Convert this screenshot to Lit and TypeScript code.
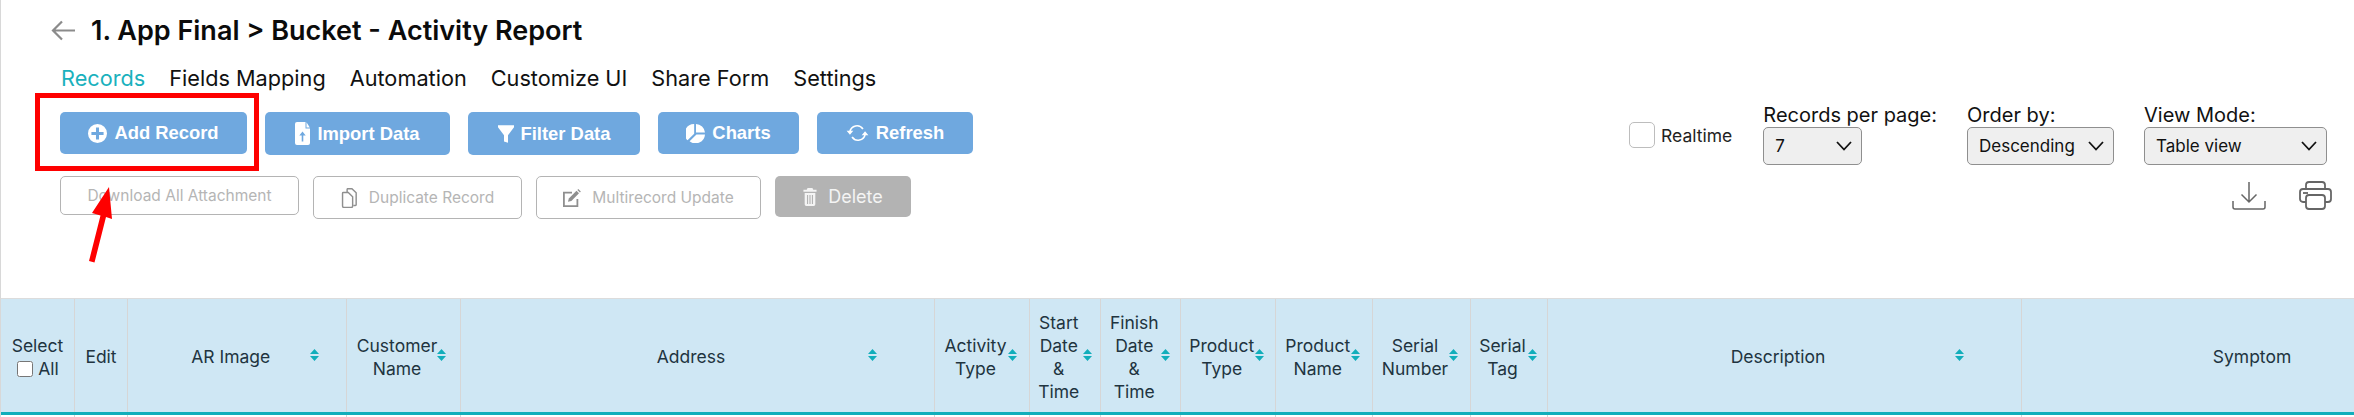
import { LitElement, css, html, svg } from 'lit'
import { customElement } from 'lit/decorators.js'

const icons = {
  plus: svg`<path fill-rule="evenodd" d="M10 0a10 10 0 1 0 0 20a10 10 0 0 0 0-20zM8.400 3.600h3.200v4.800h4.800v3.200h-4.800v4.800H8.400v-4.800H3.600V8.400h4.800z"/>`,
  file: svg`<path fill-rule="evenodd" d="M2 0h8.500v6.500H15V21a2 2 0 0 1-2 2H2a2 2 0 0 1-2-2V2a2 2 0 0 1 2-2zM11.500.3L14.800 5.500h-3.300zM7.500 9.500L4.300 13.500h2.400v6h1.600v-6h2.400z"/>`,
  filter: svg`<path d="M0 0h20v2.500L12.500 12.500V22l-5-1.500v-8L0 2.500z"/>`,
  pie: svg`<path d="M8.600 0v10.200l-7 7A10 10 0 0 1 8.600 0zM10.500 0A10 10 0 0 1 20 9h-9.500zM11 11h9a10 10 0 0 1-16.200 7.200z"/>`,
  refresh: svg`<path fill="none" stroke="currentColor" stroke-width="1.800" d="M3.600 9.500A8 8 0 0 1 18 6.500M20.400 12.500A8 8 0 0 1 6 15.500"/><path d="M0 8.500h7.400L3.700 13zM24 13.500h-7.400L20.300 9z"/>`,
  copy: svg`<g fill="none" stroke="currentColor" stroke-width="1.500"><path d="M5.500 4.500V1.500A.8.8 0 0 1 6.300.7h4.200L15 5v12.500a.8.8 0 0 1-.8.8H12"/><path d="M1.500 4.700h5.200l4.600 4.500v9.800a1.500 1.500 0 0 1-1.500 1.500H2a1.500 1.500 0 0 1-1.300-1.500V5.500a.8.8 0 0 1 .8-.8z"/></g>`,
  edit: svg`<path fill="none" stroke="currentColor" stroke-width="2" d="M10 4H1v15h15v-8"/><path d="M6.500 10.500L15 2l2.800 2.800-8.500 8.500-3.800 1z"/><path d="M16 1l1-1 2.800 2.800-1 1z"/>`,
  trash: svg`<path fill-rule="evenodd" d="M5 0h6l1 2h4v2.500H0V2h4zM1.500 6h13v14a2 2 0 0 1-2 2h-9a2 2 0 0 1-2-2zM4.300 8.500v11h1.400v-11zM7.300 8.500v11h1.400v-11zM10.300 8.500v11h1.400v-11z"/>`,
}

const mainButtons = [
  { label: 'Add Record', icon: icons.plus, box: '0 0 20 20', cls: 'add', iw: 19, ih: 19 },
  { label: 'Import Data', icon: icons.file, box: '0 0 15 23', cls: 'imp', iw: 15, ih: 23 },
  { label: 'Filter Data', icon: icons.filter, box: '0 0 20 22', cls: 'fil', iw: 16, ih: 20 },
  { label: 'Charts', icon: icons.pie, box: '0 0 20 20', cls: 'cha', iw: 19, ih: 19 },
  { label: 'Refresh', icon: icons.refresh, box: '0 0 24 22', cls: 'ref', iw: 23, ih: 20 },
]

const columns = [
  { w: 73.5, lines: ['Select'], select: true },
  { w: 53, lines: ['Edit'], plain: true },
  { w: 218.5, lines: ['AR Image'] },
  { w: 114, lines: ['Customer', 'Name'] },
  { w: 474, lines: ['Address'] },
  { w: 95, lines: ['Activity', 'Type'] },
  { w: 71.5, lines: ['Start', 'Date', '&', 'Time'] },
  { w: 79.5, lines: ['Finish', 'Date', '&', 'Time'] },
  { w: 95.5, lines: ['Product', 'Type'] },
  { w: 96.5, lines: ['Product', 'Name'] },
  { w: 98, lines: ['Serial', 'Number'] },
  { w: 77, lines: ['Serial', 'Tag'] },
  { w: 474, lines: ['Description'] },
  { w: 474, lines: ['Symptom'] },
]

@customElement('app-root')
export class AppRoot extends LitElement {
  static styles = css`
    :host {
      display: block;
      width: 2354px;
      height: 417px;
      overflow: hidden;
      position: relative;
      background: #fff;
      font-family: Inter, 'Liberation Sans', sans-serif;
      color: #111;
    }
    .page {
      border-left: 1px solid #d8d8d8;
      height: 417px;
      box-sizing: border-box;
    }
    .title-row {
      display: flex;
      align-items: center;
      height: 40px;
      padding: 10px 0 0 50px;
      gap: 16px;
    }
    .title-row svg { width: 24px; height: 21px; color: #8b8b8b; }
    h1 {
      margin: 0;
      font-size: 27px;
      font-weight: 600;
      color: #0b0b0b;
      white-space: nowrap;
    }
    nav {
      display: flex;
      gap: 24px;
      height: 28px;
      align-items: center;
      padding: 14px 0 0 60px;
      font-size: 21.7px;
    }
    nav .on { color: #1ab1bd; }
    .tools {
      display: flex;
      justify-content: space-between;
      height: 206px;
      padding: 20px 27px 0 59px;
      box-sizing: border-box;
    }
    .row { display: flex; align-items: flex-start; gap: 18px; }
    .row + .row { margin-top: 21px; gap: 14px; }
    .btn {
      display: inline-flex;
      align-items: center;
      justify-content: center;
      box-sizing: border-box;
      border-radius: 5px;
      white-space: nowrap;
    }
    .main {
      height: 42px;
      background: #6fa8df;
      color: #fff;
      font: bold 18.400px 'Liberation Sans', sans-serif;
      gap: 7px;
    }
    .main svg { fill: currentColor; }
    .add { width: 187px; }
    .imp { width: 185px; height: 43px; }
    .fil { width: 172px; height: 43px; }
    .cha { width: 141px; }
    .ref { width: 156px; }
    .ghost {
      border: 1px solid #b4b4b4;
      color: #b5b5b5;
      font-size: 15.500px;
      height: 43px;
      gap: 11px;
    }
    .ghost svg { fill: #8f8f8f; color: #8f8f8f; }
    .dl { width: 239px; height: 39px; }
    .dup { width: 209px; }
    .multi { width: 225px; }
    .del {
      width: 136px;
      height: 41px;
      background: #b3b3b3;
      color: #f4f4f4;
      font-size: 18px;
      gap: 11px;
    }
    .del svg { fill: #f4f4f4; }
    .side { display: flex; flex-direction: column; align-items: flex-end; }
    .controls { display: flex; align-items: flex-start; gap: 30px; margin-top: -8px; }
    .realtime {
      display: flex;
      align-items: center;
      gap: 6px;
      font-size: 17.500px;
      margin: 18px 1px 0 0;
      color: #222;
    }
    .realtime i {
      display: block;
      width: 26px;
      height: 26px;
      box-sizing: border-box;
      border: 1px solid #bdbdbd;
      border-radius: 5px;
    }
    .field { display: flex; flex-direction: column; font-size: 20px; line-height: 23px; }
    .sel {
      display: flex;
      align-items: center;
      justify-content: space-between;
      height: 38px;
      box-sizing: border-box;
      border: 1px solid #8f8f8f;
      border-radius: 5px;
      background: #efefef;
      font-size: 17px;
      padding: 0 9px 0 11px;
    }
    .sel svg { width: 16px; height: 10px; }
    .s-pages { width: 99px; }
    .s-order { width: 147px; }
    .s-view { width: 183px; }
    .actions { display: flex; gap: 33px; margin: 16px -5px 0 0; color: #666; }
    .wrap { overflow: hidden; width: 2353px; border-top: 1px solid #dcdcdc; }
    table { border-collapse: collapse; table-layout: fixed; width: 2494px; }
    th {
      position: relative;
      height: 114px;
      padding: 3px 16px 0 4px;
      background: #cfe7f4;
      border-right: 1px solid #d6d6d6;
      border-bottom: 3px solid #12aebb;
      font-size: 17.500px;
      font-weight: 400;
      line-height: 23px;
      color: #21343f;
      text-align: center;
      box-sizing: border-box;
    }
    th.plain, th.sel-all { padding: 3px 0 0; }
    th input { width: 16px; height: 16px; margin: 0 5px 0 1px; vertical-align: -2px; }
    th div { white-space: nowrap; }
    .sort {
      position: absolute;
      top: 50%;
      right: 12%;
      width: 9px;
      height: 12px;
      margin-top: -6px;
    }
    td { height: 10px; border-right: 1px solid #d6d6d6; padding: 0; }
    .callout {
      position: absolute;
      left: 35px;
      top: 93px;
      width: 224px;
      height: 78px;
      box-sizing: border-box;
      border: 5px solid #fe0000;
      pointer-events: none;
    }
    .arrow { position: absolute; left: 80px; top: 180px; width: 40px; height: 90px; }
  `

  private header(c: (typeof columns)[number]) {
    if (c.select) {
      return html`<th class="sel-all">
        <div>Select</div>
        <div><input type="checkbox" />All</div>
      </th>`
    }
    return html`<th class=${c.plain ? 'plain' : ''}>
      ${c.lines.map((l) => html`<div>${l}</div>`)}
      ${c.plain
        ? ''
        : html`<svg class="sort" viewBox="0 0 9 12" fill="#12aebb"><path d="M4.500 0L9 5H0zM0 7h9L4.500 12z" /></svg>`}
    </th>`
  }

  render() {
    const chevron = html`<svg viewBox="0 0 16 10" fill="none" stroke="#111" stroke-width="1.800"><path d="M1 1l7 7.500L15 1" /></svg>`
    return html`
      <div class="page">
        <div class="title-row">
          <svg viewBox="0 0 24 21" fill="none" stroke="currentColor" stroke-width="2.200"><path d="M24 10.500H2M11 1.500l-9 9 9 9" /></svg>
          <h1>1. App Final &gt; Bucket - Activity Report</h1>
        </div>
        <nav>
          <span class="on">Records</span>
          <span>Fields Mapping</span>
          <span>Automation</span>
          <span>Customize UI</span>
          <span>Share Form</span>
          <span>Settings</span>
        </nav>
        <div class="tools">
          <div>
            <div class="row">
              ${mainButtons.map(
                (b) => html`<span class="btn main ${b.cls}">
                  <svg viewBox=${b.box} width=${b.iw} height=${b.ih}>${b.icon}</svg>${b.label}
                </span>`,
              )}
            </div>
            <div class="row">
              <span class="btn ghost dl">Download All Attachment</span>
              <span class="btn ghost dup"><svg viewBox="0 0 16 21" width="17" height="20">${icons.copy}</svg>Duplicate Record</span>
              <span class="btn ghost multi"><svg viewBox="0 0 20 20" width="18" height="18">${icons.edit}</svg>Multirecord Update</span>
              <span class="btn del"><svg viewBox="0 0 16 22" width="14" height="18">${icons.trash}</svg>Delete</span>
            </div>
          </div>
          <div class="side">
            <div class="controls">
              <label class="realtime"><i></i>Realtime</label>
              <div class="field">Records per page:<div class="sel s-pages">7 ${chevron}</div></div>
              <div class="field">Order by:<div class="sel s-order">Descending ${chevron}</div></div>
              <div class="field">View Mode:<div class="sel s-view">Table view ${chevron}</div></div>
            </div>
            <div class="actions">
              <svg width="34" height="29" viewBox="0 0 34 29" fill="none" stroke="currentColor" stroke-width="1.500"><path d="M17 1v20M9.500 13.500L17 21l7.500-7.500M1 20v6a2 2 0 0 0 2 2h28a2 2 0 0 0 2-2v-6" /></svg>
              <svg width="33" height="29" viewBox="0 0 33 29" fill="none" stroke="currentColor" stroke-width="1.800"><path d="M7 8V4a3 3 0 0 1 3-3h13a3 3 0 0 1 3 3v4M7 21H4a3 3 0 0 1-3-3v-7a3 3 0 0 1 3-3h25a3 3 0 0 1 3 3v7a3 3 0 0 1-3 3h-3" /><rect x="7" y="14" width="19" height="14" rx="3" /><path d="M4 12h5" /></svg>
            </div>
          </div>
        </div>
        <div class="wrap">
          <table>
            <colgroup>${columns.map((c) => html`<col style="width:${c.w}px" />`)}</colgroup>
            <thead><tr>${columns.map((c) => this.header(c))}</tr></thead>
            <tbody><tr>${columns.map(() => html`<td></td>`)}</tr></tbody>
          </table>
        </div>
      </div>
      <div class="callout"></div>
      <svg class="arrow" viewBox="0 0 40 90" fill="#fe0000"><path d="M29 7L12 33l8.500 2.500L9 81l5.500 1.500L26 37l6 2z" /></svg>
    `
  }
}
